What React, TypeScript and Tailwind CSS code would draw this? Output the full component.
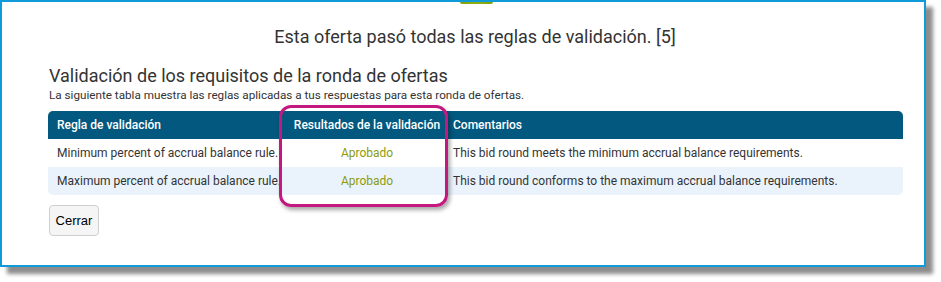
import React from "react";

const rows = [
  {
    rule: "Minimum percent of accrual balance rule.",
    result: "Aprobado",
    comment: "This bid round meets the minimum accrual balance requirements.",
  },
  {
    rule: "Maximum percent of accrual balance rule.",
    result: "Aprobado",
    comment: "This bid round conforms to the maximum accrual balance requirements.",
  },
];

export default function App() {
  return (
    <div className="w-[941px] h-[282px] bg-white relative overflow-hidden" style={{ fontFamily: "Roboto, 'Noto Sans', sans-serif" }}>
      <div className="relative w-[926px] h-[267px] border-2 border-[#0f9bd9] bg-white shadow-[7px_7px_4px_rgba(0,0,0,0.45)]">
        <div className="absolute left-[458px] top-0 w-[33px] h-[2px] rounded-b-full bg-gradient-to-r from-[#7fa30f] via-[#8fae12] to-[#7fa30f]" />
        <div className="pt-[23px] pl-[24px] text-center text-[18px] leading-[24px] text-[#333333]">
          Esta oferta pasó todas las reglas de validación. [5]
        </div>
        <div className="pl-[46px] pr-[21px] pt-[15px]">
          <div className="pl-[1px] text-[18px] leading-[24px] text-[#333333]">
            Validación de los requisitos de la ronda de ofertas
          </div>
          <div className="pl-[1px] text-[11.7px] leading-[14px] text-[#333333]">
            La siguiente tabla muestra las reglas aplicadas a tus respuestas para esta ronda de ofertas.
          </div>
          <div className="mt-[9px] text-[12px]">
            <div className="grid grid-cols-[237px_164px_1fr] h-[28px] items-center bg-[#03587f] text-white font-medium rounded-t-[5px]">
              <div className="pl-[9px]">Regla de validación</div>
              <div className="text-center">Resultados de la validación</div>
              <div className="pl-[4px]">Comentarios</div>
            </div>
            {rows.map((r, i) => (
              <div
                key={i}
                className={
                  i % 2 === 1
                    ? "grid grid-cols-[237px_164px_1fr] h-[28px] items-center bg-[#eaf3fc] text-[#333333] rounded-b-[5px]"
                    : "grid grid-cols-[237px_164px_1fr] h-[28px] items-center bg-white text-[#333333]"
                }
              >
                <div className="pl-[9px] whitespace-nowrap">{r.rule}</div>
                <div className="text-center text-[#8b9c0c]">{r.result}</div>
                <div className="pl-[4px] whitespace-nowrap">{r.comment}</div>
              </div>
            ))}
          </div>
          <button
            className="ml-[1px] mt-[10px] w-[50px] h-[31px] border border-[#cfcfcf] bg-[#f5f5f5] rounded-[4px] text-[13px] text-black"
            style={{ fontFamily: "'Liberation Sans', Arial, sans-serif" }}
          >
            Cerrar
          </button>
        </div>
        <div className="absolute left-[277px] top-[103px] w-[169px] h-[102px] border-[3px] border-[#c4177f] rounded-[12px] shadow-[2px_3px_4px_rgba(0,0,0,0.35)]" />
      </div>
    </div>
  );
}
